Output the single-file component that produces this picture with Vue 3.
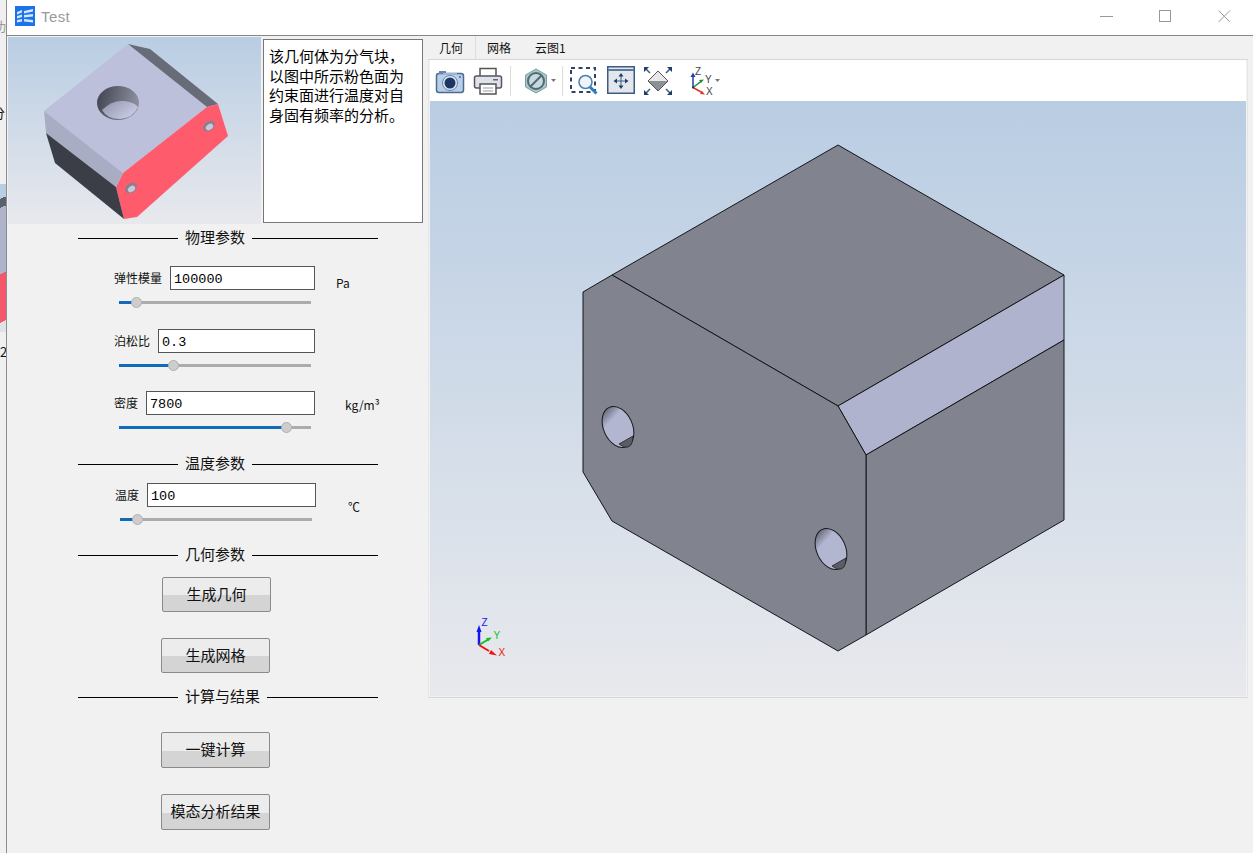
<template>
  <div class="desk">
    <div class="behind">
      <span class="behind-a">功</span>
      <span class="behind-b">分</span>
      <div class="behind-pic"></div>
      <span class="behind-c">2</span>
    </div>
    <div class="window">
      <header class="titlebar">
        <svg class="app-icon" width="20" height="20" viewBox="0 0 20 20">
          <rect width="20" height="20" fill="#1a73e8" />
          <path d="M2 6l5-2v2.500L2 8.500zM2 10l5-1.500V11l-5 1.500zM2 14l5-1v2.500l-5 1zM9 5l9-2v2.500l-9 2zM9 9l9-1v2.500l-9 1zM9 13l9 1v2.500l-9-1z" fill="#d5e5fb" />
        </svg>
        <span class="title">Test</span>
        <div class="winbtns">
          <svg width="13" height="13" viewBox="0 0 13 13"><path d="M0 6.500h13" stroke="#999" fill="none" /></svg>
          <svg width="13" height="13" viewBox="0 0 13 13"><rect x="0.500" y="0.500" width="11" height="11" stroke="#999" fill="none" /></svg>
          <svg width="13" height="13" viewBox="0 0 13 13"><path d="M0.500 0.500l11.500 11.500M12 0.500L0.500 12" stroke="#999" fill="none" /></svg>
        </div>
      </header>

      <div class="body">
        <aside class="left">
          <div class="top-row">
            <svg class="thumb" width="253" height="187" viewBox="8 37 253 187">
              <defs>
                <linearGradient id="thumbBg" x1="0" y1="0" x2="0" y2="1">
                  <stop offset="0" stop-color="#b9cde3" />
                  <stop offset="1" stop-color="#e8e9ed" />
                </linearGradient>
                <linearGradient id="thumbHole" x1="0" y1="0" x2="1" y2="0.2">
                  <stop offset="0" stop-color="#3f424c" />
                  <stop offset="1" stop-color="#8a8d9c" />
                </linearGradient>
                <linearGradient id="thumbLit" x1="0" y1="0" x2="1" y2="0.6">
                  <stop offset="0" stop-color="#8f92a8" />
                  <stop offset="1" stop-color="#c8cbe4" />
                </linearGradient>
              </defs>
              <rect x="8" y="37" width="253" height="187" fill="url(#thumbBg)" />
              <polygon points="128,44 207,107 123,173 44,111" fill="#bcc0da" />
              <polygon points="128,44 150,49 218,104 207,107" fill="#686b78" />
              <polygon points="207,107 218,104 228,136 137,217 124,219 116,187 123,173" fill="#fe5c6c" />
              <polygon points="44,111 123,173 116,187 46,133" fill="#a9adc4" />
              <polygon points="46,133 116,187 124,219 55,163" fill="#3c3e47" />
              <ellipse cx="118" cy="103" rx="21" ry="17" fill="url(#thumbHole)" />
              <path d="M102 110Q112 100 124 101Q134 102 138 107Q133 118 120 119Q107 119 102 110Z" fill="url(#thumbLit)" />
              <ellipse cx="209" cy="126" rx="6.500" ry="4.500" transform="rotate(-35 209 126)" fill="#8b7f8b" />
              <ellipse cx="209.500" cy="127" rx="4" ry="2.800" transform="rotate(-35 209.500 127)" fill="#c6c9de" />
              <ellipse cx="131" cy="188" rx="6.500" ry="4.500" transform="rotate(-35 131 188)" fill="#8b7f8b" />
              <ellipse cx="131.500" cy="189" rx="4" ry="2.800" transform="rotate(-35 131.500 189)" fill="#c6c9de" />
            </svg>
            <div class="note">该几何体为分气块，以图中所示粉色面为约束面进行温度对自身固有频率的分析。</div>
          </div>

          <div class="section first"><i class="line"></i><span>物理参数</span><i class="line grow"></i></div>
          <div v-for="f in physical" :key="f.label" class="field" :style="{ marginTop: f.top + 'px' }">
            <div class="field-row">
              <div class="field-main">
                <label>{{ f.label }}</label>
                <div class="input">{{ f.value }}</div>
              </div>
              <span v-if="f.unit" class="unit" :style="{ marginLeft: f.unitX + 'px', marginTop: f.unitY + 'px' }">{{ f.unit }}</span>
            </div>
            <div class="slider">
              <div class="fill" :style="{ width: f.pos + 'px' }"></div>
              <div class="knob" :style="{ left: f.pos - 6 + 'px' }"></div>
            </div>
          </div>

          <div class="section temp"><i class="line"></i><span>温度参数</span><i class="line grow"></i></div>
          <div class="field shifted">
            <div class="field-row">
              <div class="field-main">
                <label>温度</label>
                <div class="input">100</div>
              </div>
              <span class="unit celsius">℃</span>
            </div>
            <div class="slider">
              <div class="fill short-fill"></div>
              <div class="knob short-knob"></div>
            </div>
          </div>

          <div class="section geo"><i class="line"></i><span>几何参数</span><i class="line grow"></i></div>
          <button class="btn b1">生成几何</button>
          <button class="btn b2">生成网格</button>
          <div class="section calc"><i class="line"></i><span>计算与结果</span><i class="line grow"></i></div>
          <button class="btn b3">一键计算</button>
          <button class="btn b4">模态分析结果</button>
        </aside>

        <main class="right">
          <nav class="tabs">
            <span class="tab active">几何</span>
            <span class="tab">网格</span>
            <span class="tab">云图1</span>
          </nav>
          <div class="pane">
            <div class="toolbar">
              <svg width="30" height="28" viewBox="0 0 30 28">
                <rect x="1.500" y="6.500" width="27" height="19" rx="2.500" fill="#b9cfe6" stroke="#4d6a94" stroke-width="1.500" />
                <rect x="4" y="4" width="7" height="3" fill="#6c86aa" />
                <rect x="8" y="6" width="14" height="2" fill="#9db6d3" />
                <circle cx="15" cy="16" r="7.500" fill="#dce8f4" stroke="#6a86aa" />
                <circle cx="15" cy="16" r="5.500" fill="#1c3665" />
                <circle cx="25" cy="10" r="1" fill="#4d6a94" />
              </svg>
              <svg class="gap-s" width="30" height="30" viewBox="0 0 30 30">
                <path d="M7 10V2.500h16V10" fill="#fff" stroke="#555" stroke-width="1.500" />
                <rect x="1.500" y="10" width="27" height="12" rx="2" fill="#dfe3e8" stroke="#556" stroke-width="1.500" />
                <rect x="20" y="13" width="5" height="1.500" fill="#667" />
                <rect x="7" y="18" width="16" height="10" fill="#fff" stroke="#555" stroke-width="1.500" />
                <path d="M10 22h10M10 25h10" stroke="#99a" />
              </svg>
              <i class="sep"></i>
              <svg width="24" height="26" viewBox="0 0 24 26">
                <polygon points="12,1 22.500,7 22.500,19 12,25 1.500,19 1.500,7" fill="#a9c7c6" stroke="#7d9ea0" />
                <circle cx="12" cy="13" r="8" fill="#c9d8de" stroke="#4d6a78" stroke-width="2" />
                <path d="M6.500 18.500L17.500 7.500" stroke="#4d6a78" stroke-width="2" />
              </svg>
              <svg class="caret" width="5" height="3" viewBox="0 0 5 3"><path d="M0 0h5L2.500 3z" fill="#777" /></svg>
              <i class="sep"></i>
              <svg width="28" height="28" viewBox="0 0 28 28">
                <rect x="1" y="1" width="24" height="24" fill="none" stroke="#2c4468" stroke-width="2" stroke-dasharray="4 3.500" />
                <circle cx="15.500" cy="15" r="6.500" fill="#eef4fa" stroke="#4d7fb0" stroke-width="1.500" />
                <path d="M20 20L26.500 26.500" stroke="#2b7fc0" stroke-width="3" />
              </svg>
              <svg class="gap-fit" width="29" height="29" viewBox="0 0 29 29">
                <rect x="0.750" y="0.750" width="26.500" height="26.500" fill="#e3e7ec" stroke="#3d5a85" stroke-width="1.500" />
                <rect x="1" y="3" width="26" height="2" fill="#5f7aa0" />
                <path d="M14 9v12M8.500 15h11" stroke="#3d5a85" />
                <path d="M14 7l-2.500 3.500h5zM14 23l-2.500-3.500h5zM6.500 15l3.500-2.500v5zM21.500 15l-3.500-2.500v5z" fill="#1f3d6a" />
              </svg>
              <svg class="gap-dia" width="28" height="28" viewBox="0 0 28 28">
                <polygon points="14,4 24,14 4,14" fill="#e8e8ea" />
                <polygon points="4,14 24,14 14,24" fill="#8e9096" />
                <polygon points="14,4 24,14 14,24 4,14" fill="none" stroke="#555" />
                <path d="M1 1l5 5M27 1l-5 5M1 27l5-5M27 27l-5-5" stroke="#3d5a85" stroke-width="1.500" />
                <path d="M0 0h5L0 5zM28 0h-5l5 5zM0 28h5l-5-5zM28 28h-5l5-5z" fill="#1f3d6a" />
              </svg>
              <svg class="triad" width="32" height="30" viewBox="0 0 32 30">
                <path d="M5 21.500V9" stroke="#1f3fb0" stroke-width="1.500" />
                <path d="M5 6.500L2.500 11h5z" fill="#1f3fb0" />
                <path d="M5 21.500l8-6" stroke="#1a8a3a" stroke-width="1.500" />
                <path d="M16 13.500l-5 .5 2 3z" fill="#1a8a3a" />
                <path d="M5 21.500l9 5" stroke="#e03030" stroke-width="1.500" />
                <path d="M17 28.500l-5-.5 2-3z" fill="#e03030" />
                <circle cx="5" cy="21.500" r="1" fill="#222" />
                <text x="7" y="9" class="triad-t">Z</text>
                <text x="17" y="17" class="triad-t">Y</text>
                <text x="18" y="29" class="triad-t">X</text>
              </svg>
              <svg class="caret tight" width="5" height="3" viewBox="0 0 5 3"><path d="M0 0h5L2.500 3z" fill="#777" /></svg>
            </div>
            <svg class="scene" width="816" height="595" viewBox="430 101 816 595">
              <defs>
                <linearGradient id="viewBg" x1="0" y1="0" x2="0" y2="1">
                  <stop offset="0" stop-color="#b9cde3" />
                  <stop offset="1" stop-color="#e8e9ed" />
                </linearGradient>
                <linearGradient id="holeFill" x1="0" y1="0" x2="0.3" y2="1">
                  <stop offset="0" stop-color="#4a4c56" />
                  <stop offset="0.38" stop-color="#b2b6d0" />
                  <stop offset="1" stop-color="#b2b6d0" />
                </linearGradient>
              </defs>
              <rect x="430" y="101" width="816" height="595" fill="url(#viewBg)" />
              <g stroke="#15161a" stroke-width="1" stroke-linejoin="round">
                <polygon points="838,145 1064,275 838,406 612,275" fill="#81838f" />
                <polygon points="1064,275 1064,340 866,455 838,406" fill="#b0b3cd" />
                <polygon points="866,455 1064,340 1064,520 866,635" fill="#81838f" />
                <polygon points="612,275 838,406 866,455 866,635 838,651 612,521 583,472 583,292" fill="#81838f" />
                <g v-for="h in holes" :key="h.x">
                  <ellipse :cx="h.x" :cy="h.y" rx="14.500" ry="21.500" :transform="`rotate(-24 ${h.x} ${h.y})`" fill="url(#holeFill)" />
                  <path :d="`M${h.x + 1} ${h.y + 17}L${h.x + 15} ${h.y + 9}Q${h.x + 15} ${h.y + 22} ${h.x + 6} ${h.y + 20}Z`" fill="#5a5c66" stroke-width="0.700" />
                </g>
              </g>
              <g>
                <path d="M479 645V630" stroke="#1414f0" stroke-width="2.500" />
                <path d="M479 625l-2.500 7h5z" fill="#1414f0" />
                <path d="M479 645l10-6" stroke="#10c020" stroke-width="2" />
                <path d="M492 637.500l-6 .5 2 3.500z" fill="#10c020" />
                <path d="M479 645l10 6" stroke="#f01010" stroke-width="2" />
                <path d="M497 655.500l-8-1.500 2-4z" fill="#f01010" />
                <text x="481.500" y="626" class="axis" fill="#1414f0">Z</text>
                <text x="493.500" y="639" class="axis" fill="#10c020">Y</text>
                <text x="498.500" y="656" class="axis" fill="#f01010">X</text>
              </g>
            </svg>
          </div>
        </main>
      </div>
    </div>
  </div>
</template>

<script setup>
const physical = [
  { label: '弹性模量', value: '100000', unit: 'Pa', unitX: 21, unitY: 8, pos: 18, top: 18 },
  { label: '泊松比', value: '0.3', unit: '', pos: 55, top: 25 },
  { label: '密度', value: '7800', unit: 'kg/m³', unitX: 30, unitY: 2, pos: 168, top: 24 },
]

const holes = [
  { x: 618, y: 427 },
  { x: 831, y: 549 },
]
</script>

<style>
html,
body {
  margin: 0;
  background: #f1f1f1;
}
</style>

<style scoped>
.desk {
  display: flex;
  width: 1253px;
  height: 853px;
  overflow: hidden;
  font-family: "Noto Sans CJK SC", "Liberation Sans", sans-serif;
  color: #111;
}

.behind {
  position: relative;
  width: 6px;
  flex: none;
  background: #f0f0f0;
  overflow: hidden;
  font-size: 13px;
}
.behind-a {
  position: absolute;
  left: -7px;
  top: 16px;
  color: #999;
}
.behind-b {
  position: absolute;
  left: -8px;
  top: 103px;
}
.behind-pic {
  position: absolute;
  top: 184px;
  left: 0;
  width: 6px;
  height: 148px;
  background: linear-gradient(155deg, #b9cde3 0 10%, #5c5f6c 10% 16%, #b0b4ca 16% 60%, #f2586a 60% 92%, #dfe3e9 92%);
}
.behind-c {
  position: absolute;
  left: 0;
  top: 342px;
}

.window {
  flex: 1;
  min-width: 0;
  border-left: 1px solid #8d8d8d;
  background: #f1f1f1;
  display: flex;
  flex-direction: column;
}

.titlebar {
  height: 35px;
  flex: none;
  background: #fff;
  border-bottom: 1px solid #868686;
  display: flex;
  align-items: center;
  padding-left: 8px;
}
.app-icon {
  margin-top: -3px;
}
.title {
  margin-left: 6px;
  margin-top: -3px;
  font: 15px "Liberation Sans", sans-serif;
  color: #9a9a9a;
  letter-spacing: 0.4px;
}
.winbtns {
  margin-left: auto;
  display: flex;
  gap: 46px;
  padding-right: 22px;
  margin-top: -3px;
}

.body {
  flex: 1;
  display: flex;
  min-height: 0;
}

.left {
  width: 421px;
  flex: none;
  padding-top: 1px;
}

.top-row {
  display: flex;
  height: 187px;
  padding-left: 1px;
}
.thumb {
  display: block;
  flex: none;
}
.note {
  box-sizing: border-box;
  width: 160px;
  height: 184px;
  margin: 2px 0 0 2px;
  padding: 6px 5px;
  background: #fff;
  border: 1px solid #777;
  font-size: 15px;
  line-height: 19.500px;
  color: #000;
}

.section {
  display: flex;
  align-items: center;
  width: 300px;
  height: 20px;
  margin-left: 71px;
  font-size: 15px;
  color: #111;
}
.section span {
  padding: 0 7px 4px;
  white-space: nowrap;
}
.line {
  flex: none;
  width: 100px;
  height: 1px;
  background: #000;
}
.line.grow {
  flex: 1;
  width: auto;
}
.section.first {
  margin-top: 4px;
}
.section.temp {
  margin-top: 25px;
}
.section.geo {
  margin-top: 24px;
}
.section.calc {
  margin-top: 14px;
}

.field {
  margin-left: 107px;
  width: 300px;
}
.field.shifted {
  margin-left: 108px;
  margin-top: 9px;
}
.field-row {
  display: flex;
  height: 24px;
  align-items: center;
}
.field-main {
  display: flex;
  align-items: center;
  flex: none;
  width: 201px;
}
.field-main label {
  font-size: 12px;
  margin-right: 8px;
  margin-top: -2px;
  white-space: nowrap;
}
.input {
  box-sizing: border-box;
  flex: 1;
  min-width: 0;
  height: 24px;
  background: #fff;
  border: 1px solid #555;
  padding-left: 3px;
  font: 13.500px/25px "Liberation Mono", monospace;
  color: #000;
}
.unit {
  font-size: 12px;
  white-space: nowrap;
}
.celsius {
  margin-left: 32px;
  margin-top: 22px;
}

.slider {
  position: relative;
  width: 192px;
  height: 3px;
  margin: 11px 0 0 5px;
  background: #acacac;
}
.fill {
  height: 3px;
  background: #1169b9;
}
.short-fill {
  width: 18px;
}
.knob {
  position: absolute;
  top: -4px;
  box-sizing: border-box;
  width: 11px;
  height: 11px;
  border-radius: 50%;
  background: #cdcdcd;
  border: 1px solid #b0b0b0;
}
.short-knob {
  left: 12px;
}

.btn {
  display: block;
  box-sizing: border-box;
  width: 109px;
  height: 35px;
  padding: 0 0 3px;
  border: 1px solid #8a8a8a;
  border-radius: 2px;
  background: linear-gradient(#ececec 0 52%, #d4d4d4 52%);
  font: 15px "Noto Sans CJK SC", sans-serif;
  color: #111;
}
.b1 {
  margin: 12px 0 0 155px;
}
.b2 {
  margin: 26px 0 0 154px;
}
.b3 {
  margin: 25px 0 0 154px;
  height: 36px;
}
.b4 {
  margin: 26px 0 0 154px;
  height: 36px;
}

.right {
  flex: 1;
  min-width: 0;
}
.tabs {
  display: flex;
  height: 23px;
  font-size: 12px;
  align-items: center;
}
.tab {
  padding: 0 12px 0 11px;
  line-height: 23px;
}
.tab.active {
  border-right: 1px solid #ddd;
}
.tab:last-child {
  padding-left: 12px;
}
.pane {
  box-sizing: border-box;
  width: 820px;
  padding: 0 1px 1px;
  border: 1px solid #d6d6d6;
  border-left-color: #e6e6e6;
  border-right-color: #e6e6e6;
}
.toolbar {
  height: 41px;
  background: #fff;
  display: flex;
  align-items: center;
  padding-left: 5px;
}
.toolbar svg {
  flex: none;
}
.gap-s {
  margin-left: 8px;
}
.gap-fit {
  margin-left: 9px;
}
.gap-dia {
  margin-left: 8px;
}
.sep {
  width: 1px;
  height: 30px;
  margin: 0 13px 0 7px;
  background: #dcdcdc;
}
.caret {
  margin-left: 3px;
}
.caret + .sep {
  margin: 0 7px 0 6px;
}
.triad {
  margin-left: 16px;
}
.tight {
  margin-left: -5px;
}
.triad-t {
  font: 10px "Liberation Sans", sans-serif;
  fill: #444;
}
.scene {
  display: block;
}
.axis {
  font: 10px "Liberation Sans", sans-serif;
}
</style>
